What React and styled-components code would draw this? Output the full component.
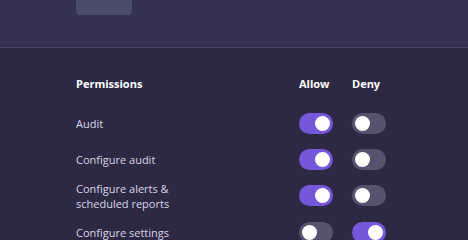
import React, { useState } from "react";
import styled, { createGlobalStyle } from "styled-components";

const GlobalStyle = createGlobalStyle`
  html, body {
    margin: 0;
    padding: 0;
    background: #2d2843;
    font-family: "Open Sans", "Noto Sans", sans-serif;
  }
`;

const permissions = [
  { id: "audit", label: "Audit", allow: true },
  { id: "configure-audit", label: "Configure audit", allow: true },
  { id: "alerts", label: ["Configure alerts &", "scheduled reports"], allow: true },
  { id: "settings", label: "Configure settings", allow: false },
];

const App = () => {
  const [values, setValues] = useState(
    Object.fromEntries(permissions.map((p) => [p.id, p.allow]))
  );

  const set = (id, v) => setValues((prev) => ({ ...prev, [id]: v }));

  return (
    <>
      <GlobalStyle />
      <Page>
        <TopBar>
          <SaveButton aria-label="Save" />
        </TopBar>
        <Content>
          <Table>
            <HeadCell>Permissions</HeadCell>
            <HeadCell>Allow</HeadCell>
            <HeadCell>Deny</HeadCell>
            {permissions.map((p) => (
              <React.Fragment key={p.id}>
                <Label>
                  {Array.isArray(p.label)
                    ? p.label.map((line) => <span key={line}>{line}</span>)
                    : p.label}
                </Label>
                <Cell>
                  <Toggle $on={values[p.id]} onClick={() => set(p.id, true)}>
                    <Knob $on={values[p.id]} />
                  </Toggle>
                </Cell>
                <Cell>
                  <Toggle $on={!values[p.id]} onClick={() => set(p.id, false)}>
                    <Knob $on={!values[p.id]} />
                  </Toggle>
                </Cell>
              </React.Fragment>
            ))}
          </Table>
        </Content>
      </Page>
    </>
  );
};

export default App;

const Page = styled.div`
  width: 468px;
  height: 240px;
  overflow: hidden;
  background: #2d2843;
`;

const TopBar = styled.div`
  height: 47px;
  background: #35324f;
  border-bottom: 1px solid #4a4766;
  padding-left: 76px;
`;

const SaveButton = styled.div`
  width: 56px;
  height: 15px;
  background: #4a4d6a;
  border-radius: 0 0 4px 4px;
`;

const Content = styled.div`
  padding: 27px 0 0 76px;
`;

const Table = styled.div`
  display: grid;
  grid-template-columns: 223px 53px 34px;
  grid-template-rows: 30px repeat(4, 36.3px);
`;

const HeadCell = styled.div`
  align-self: start;
  font-size: 11px;
  font-weight: 700;
  color: #ffffff;
  line-height: 18px;
`;

const Label = styled.div`
  display: flex;
  flex-direction: column;
  justify-content: center;
  font-size: 11px;
  line-height: 15px;
  color: #d9d6e8;
`;

const Cell = styled.div`
  display: flex;
  align-items: center;
`;

const Toggle = styled.button`
  position: relative;
  width: 34px;
  height: 21px;
  padding: 0;
  border: none;
  border-radius: 11px;
  background: ${(p) => (p.$on ? "#7557d9" : "#56536f")};
  cursor: pointer;
`;

const Knob = styled.span`
  position: absolute;
  top: 3px;
  left: ${(p) => (p.$on ? "16px" : "3px")};
  width: 15px;
  height: 15px;
  border-radius: 50%;
  background: #ffffff;
`;
